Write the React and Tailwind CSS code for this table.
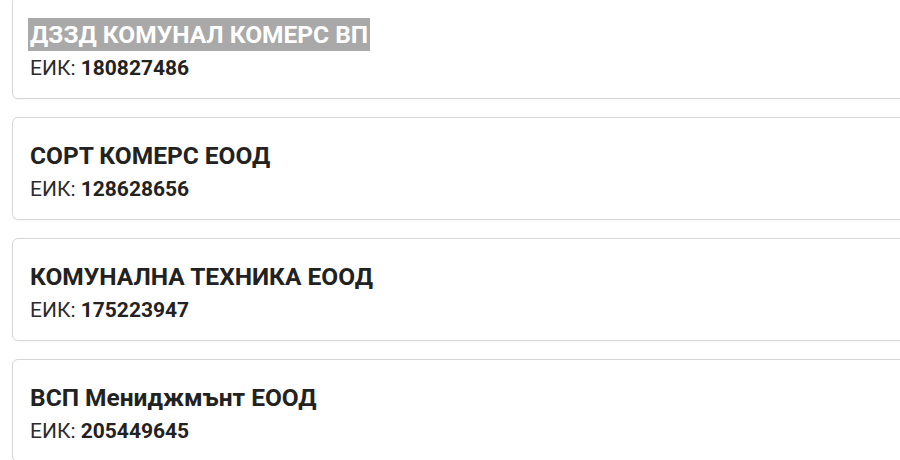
import React from "react";

const items = [
  { name: "ДЗЗД КОМУНАЛ КОМЕРС ВП", eik: "180827486", selected: true },
  { name: "СОРТ КОМЕРС ЕООД", eik: "128628656" },
  { name: "КОМУНАЛНА ТЕХНИКА ЕООД", eik: "175223947" },
  { name: "ВСП Мениджмънт ЕООД", eik: "205449645" },
];

function Card({ name, eik, selected }) {
  return (
    <div className="w-[900px] shrink-0 rounded-[6px] border border-[#d6d6d6] bg-white pl-[17px] pt-[22px] pb-[16px] shadow-[0_1px_2px_rgba(0,0,0,0.04)] font-['Roboto',sans-serif]">
      <div className="text-[24.5px] leading-[32px] font-bold text-[#222222] whitespace-nowrap">
        {selected ? (
          <span className="bg-[#a9a9a9] text-white px-[2px] -ml-[2px] py-[2px]">{name}</span>
        ) : (
          name
        )}
      </div>
      <div className="mt-[3px] text-[21px] leading-[28px] text-[#2b2b2b] whitespace-nowrap">
        <span>ЕИК: </span>
        <span className="font-bold text-[#222222]">{eik}</span>
      </div>
    </div>
  );
}

export default function App() {
  return (
    <div className="w-[900px] h-[460px] overflow-hidden bg-white">
      <div className="flex flex-col gap-[18px] pl-[12px] -mt-[4px]">
        {items.map((it) => (
          <Card key={it.eik} {...it} />
        ))}
      </div>
    </div>
  );
}
